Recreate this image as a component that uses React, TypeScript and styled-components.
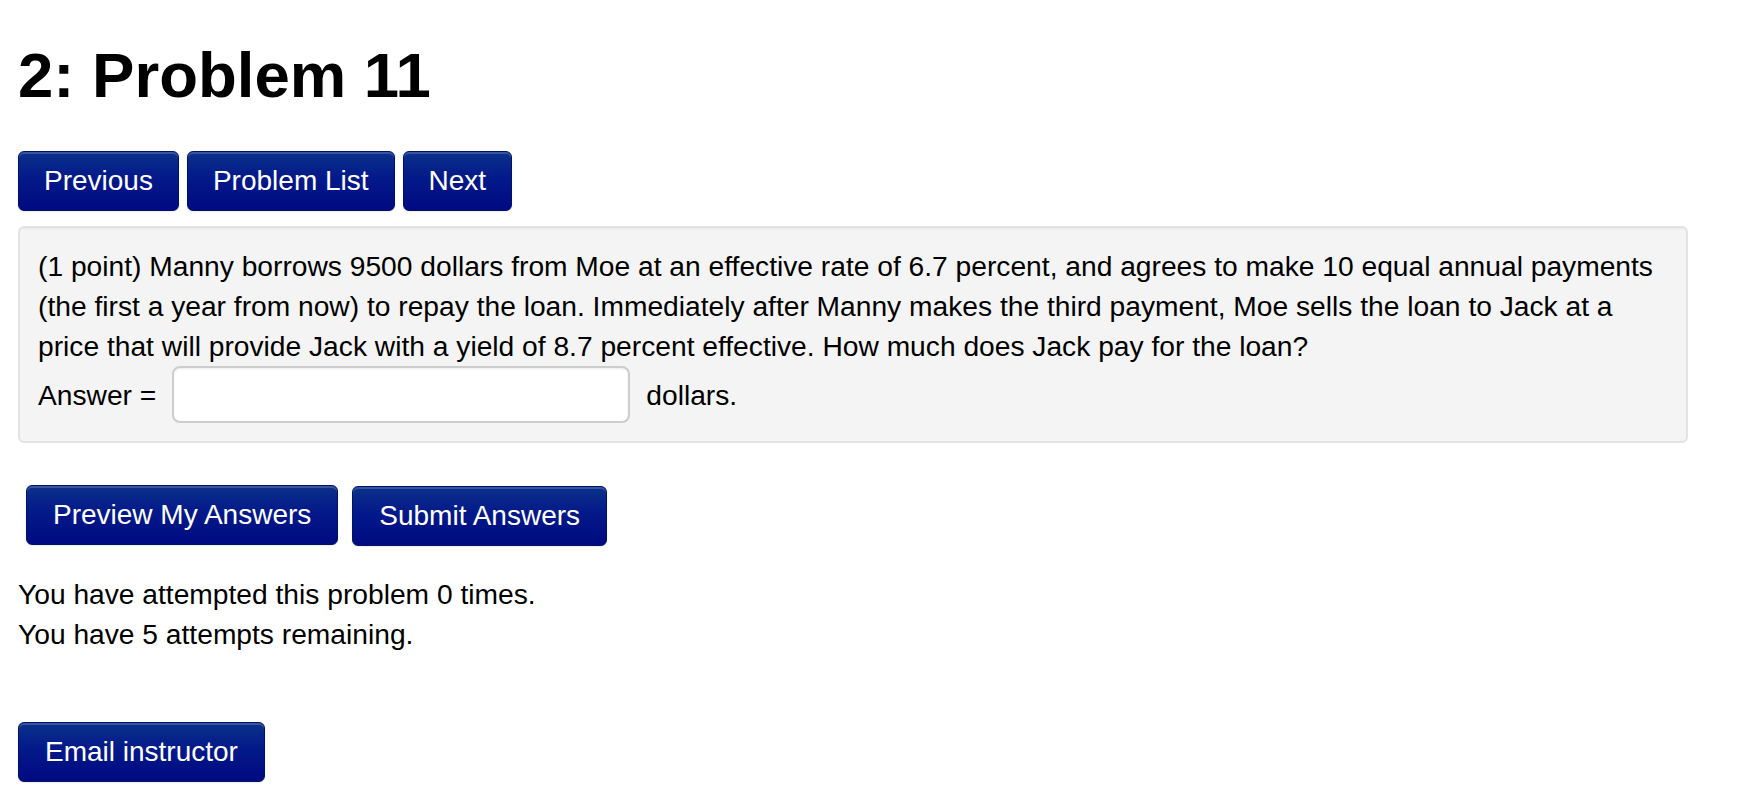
import styled, { createGlobalStyle } from "styled-components";

const GlobalStyle = createGlobalStyle`
  html, body {
    margin: 0;
    padding: 0;
    background: #fff;
  }
  body {
    font-family: "Liberation Sans", Arial, Helvetica, sans-serif;
    font-size: 28.2px;
    line-height: 40px;
    color: #000;
  }
`;

const Page = styled.div`
  padding: 0 0 24px 18px;
  width: 1670px;
`;

const Title = styled.h1`
  margin: 35px 0 0;
  font-size: 63.5px;
  line-height: 80px;
  font-weight: bold;
`;

const NavButtons = styled.div`
  display: flex;
  gap: 8px;
  margin-top: 36px;
`;

const Button = styled.button<{ $wide?: boolean }>`
  box-sizing: border-box;
  height: 60px;
  padding: 9px ${(p) => (p.$wide ? "26px" : "25px")};
  font-family: "Liberation Sans", Arial, Helvetica, sans-serif;
  font-size: 28px;
  line-height: 40px;
  color: #fff;
  background: linear-gradient(to bottom, #0b3189 0%, #03198a 45%, #000a80 100%);
  border: 1px solid #00116a;
  border-radius: 6px;
  box-shadow: inset 0 2px 0 rgba(255, 255, 255, 0.18), 0 1px 2px rgba(0, 0, 0, 0.08);
  cursor: pointer;
  white-space: nowrap;
  &:hover {
    background: #000a80;
  }
`;

const ProblemWell = styled.div`
  margin-top: 15px;
  padding: 18px;
  background-color: #f4f4f4;
  border: 2px solid #e3e3e3;
  border-radius: 6px;
  box-shadow: inset 0 1px 1px rgba(0, 0, 0, 0.04);
`;

const ProblemText = styled.p`
  margin: 0;
`;

const AnswerRow = styled.div`
  display: flex;
  align-items: center;
  gap: 16px;
`;

const AnswerInput = styled.input`
  box-sizing: border-box;
  width: 458px;
  height: 57px;
  padding: 8px 12px;
  font-family: inherit;
  font-size: 28px;
  background: #fff;
  border: 2px solid #cdcdcd;
  border-radius: 8px;
  box-shadow: inset 0 1px 2px rgba(0, 0, 0, 0.08);
  outline: none;
`;

const SubmitButtons = styled.div`
  display: flex;
  gap: 14px;
  margin-top: 42px;
  padding-left: 8px;
  align-items: flex-start;
`;

const SubmitButton = styled(Button)`
  margin-top: 1px;
`;

const Attempts = styled.div`
  margin-top: 28px;
`;

const EmailRow = styled.div`
  margin-top: 68px;
`;

function App() {
  return (
    <>
      <GlobalStyle />
      <Page>
        <Title>2: Problem 11</Title>
        <NavButtons>
          <Button>Previous</Button>
          <Button>Problem List</Button>
          <Button>Next</Button>
        </NavButtons>
        <ProblemWell>
          <ProblemText>
            (1 point) Manny borrows 9500 dollars from Moe at an effective rate of 6.7 percent, and
            agrees to make 10 equal annual payments (the first a year from now) to repay the loan.
            Immediately after Manny makes the third payment, Moe sells the loan to Jack at a price
            that will provide Jack with a yield of 8.7 percent effective. How much does Jack pay for
            the loan?
          </ProblemText>
          <AnswerRow>
            <span>Answer =</span>
            <AnswerInput type="text" aria-label="Answer" />
            <span>dollars.</span>
          </AnswerRow>
        </ProblemWell>
        <SubmitButtons>
          <Button $wide>Preview My Answers</Button>
          <SubmitButton $wide>Submit Answers</SubmitButton>
        </SubmitButtons>
        <Attempts>
          <div>You have attempted this problem 0 times.</div>
          <div>You have 5 attempts remaining.</div>
        </Attempts>
        <EmailRow>
          <Button $wide>Email instructor</Button>
        </EmailRow>
      </Page>
    </>
  );
}

export default App;
